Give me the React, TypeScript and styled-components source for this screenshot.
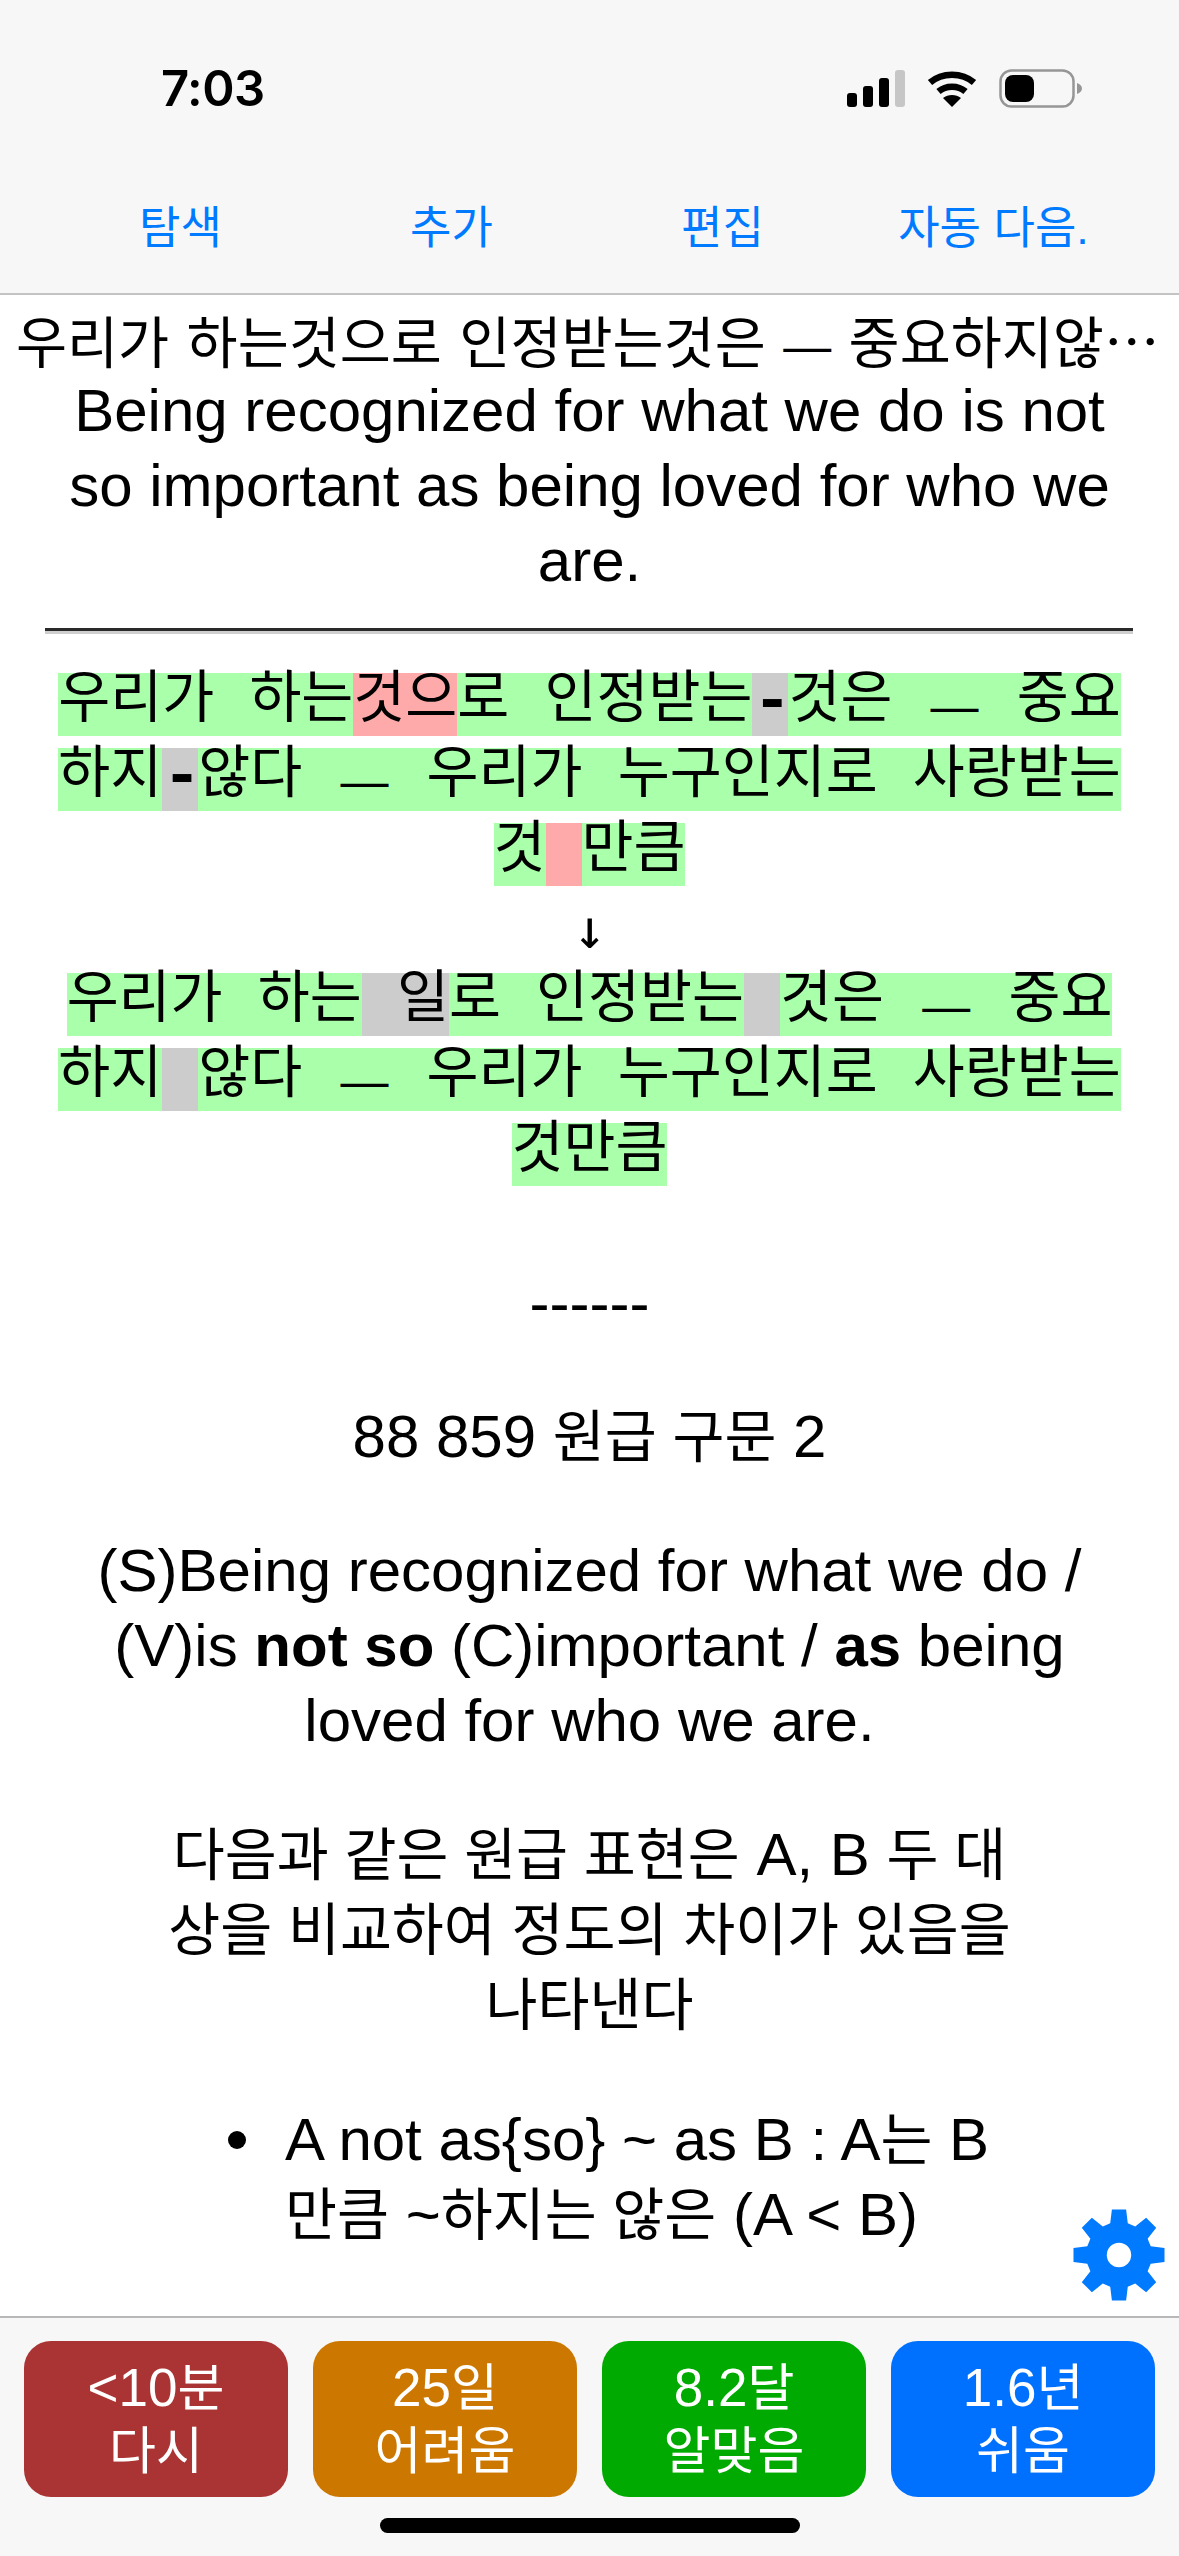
import styled, { createGlobalStyle } from 'styled-components';

const GlobalStyle = createGlobalStyle`
    html, body {
        margin: 0;
        padding: 0;
        background: #fff;
    }
`;

const sans = `"Liberation Sans", "Noto Sans CJK KR", sans-serif`;
const mono = `"Liberation Mono", "Noto Sans CJK KR", monospace`;

const Screen = styled.div`
    width: 1179px;
    height: 2556px;
    display: flex;
    flex-direction: column;
    overflow: hidden;
    position: relative;
    font-family: ${sans};
    color: #000;
`;

const Header = styled.header`
    height: 295px;
    flex: none;
    box-sizing: border-box;
    background: #f7f7f7;
    border-bottom: 2px solid #c4c4c4;
    display: flex;
    flex-direction: column;
`;

const StatusBar = styled.div`
    height: 88px;
    margin-top: 44px;
    display: flex;
    align-items: center;
    justify-content: space-between;
    padding: 0 97px 0 161px;
`;

const Clock = styled.span`
    font-family: Inter, sans-serif;
    font-size: 49px;
    font-weight: 600;
    letter-spacing: -0.5px;
`;

const StatusIcons = styled.div`
    display: flex;
    align-items: center;
    gap: 22px;
`;

const Nav = styled.nav`
    display: grid;
    grid-template-columns: repeat(4, 271px);
    padding: 0 45px;
    margin-top: 67px;
`;

const NavItem = styled.span`
    text-align: center;
    color: #007aff;
    font-size: 45px;
    line-height: 60px;
`;

const Main = styled.main`
    flex: 1;
    min-height: 0;
    padding-top: 14px;
    text-align: center;
    font-size: 60px;
    line-height: 75px;
`;

const Ko = styled.span`
    font-size: 56.5px;
    line-height: 1;
`;

const Title = styled.div`
    margin: 0 16px;
    white-space: nowrap;
    overflow: hidden;
    text-overflow: ellipsis;
    font-family: "Noto Sans CJK KR", sans-serif;
    font-size: 55.5px;
    line-height: 60px;
    word-spacing: 5px;
`;

const TitleDash = styled.span`
    font-family: "Liberation Sans", sans-serif;
    font-size: 48px;
`;

const Sentence = styled.div`
    margin-top: -4px;
    padding-bottom: 30px;
`;

const Rule = styled.hr`
    margin: 0 46px 39px 45px;
    height: 0;
    border: 0;
    border-top: 3px solid #2a2a2a;
    border-bottom: 3px solid #cfcfcf;
`;

const Compare = styled.div`
    display: flex;
    flex-direction: column;
    align-items: center;
    gap: 12px;
`;

const CompareLine = styled.div`
    height: 63px;
    display: flex;
    font-family: ${mono};
    font-size: 56.5px;
    line-height: 59px;
    white-space: pre;
    word-spacing: 1.3px;
`;

const toneColors = { good: '#aaffaa', bad: '#ffaaaa', missing: '#cccccc' };

const Seg = styled.span<{ $tone: keyof typeof toneColors; $width?: number }>`
    display: block;
    background: ${(p) => toneColors[p.$tone]};
    ${(p) => (p.$width ? `width: ${p.$width}px; text-align: center;` : '')}
`;

const EmDash = styled.span`
    font-family: "Liberation Sans", sans-serif;
    font-size: 48px;
    margin: 0 3px;
    vertical-align: -6px;
`;

const MissingDash = styled.span`
    font-family: "Liberation Mono", monospace;
    font-size: 66px;
    font-weight: 700;
    vertical-align: -2px;
`;

const Arrow = styled.div`
    font-family: "DejaVu Sans Mono", monospace;
    font-size: 55px;
    line-height: 63px;
    text-align: center;
`;

const Separator = styled.p`
    margin: 79px 0 0;
`;

const Para = styled.p`
    margin: 59px 0 0;
    padding: 0 40px;
`;

const List = styled.ul`
    margin: 60px 0 0;
    padding: 0 0 0 285px;
    text-align: left;
    list-style: none;
`;

const ListItem = styled.li`
    position: relative;

    &::before {
        content: "";
        position: absolute;
        left: -57px;
        top: 29px;
        width: 18px;
        height: 18px;
        border-radius: 50%;
        background: #000;
    }
`;

const Footer = styled.footer`
    height: 240px;
    flex: none;
    box-sizing: border-box;
    background: #f7f7f7;
    border-top: 2px solid #b8b8b8;
    padding: 23px 24px 0;
    display: flex;
    flex-direction: column;
    align-items: center;
`;

const Answers = styled.div`
    width: 100%;
    display: grid;
    grid-template-columns: repeat(4, 264px);
    justify-content: space-between;
`;

const Answer = styled.button<{ $bg: string }>`
    height: 156px;
    border: 0;
    padding: 0;
    border-radius: 27px;
    background: ${(p) => p.$bg};
    color: #fff;
    font-family: ${sans};
    font-size: 53px;
    line-height: 63px;
`;

const AnswerKo = styled.span`
    font-size: 51px;
    line-height: 1;
`;

const HomeBar = styled.div`
    width: 420px;
    height: 15px;
    margin-top: 21px;
    border-radius: 8px;
    background: #000;
`;

const GearButton = styled.div`
    position: absolute;
    left: 1072px;
    top: 2208px;
    width: 94px;
    height: 94px;
`;

const gearPath = (() => {
    const cx = 50;
    const cy = 50;
    const teeth = 8;
    const outer = 49;
    const root = 35;
    const pt = (r: number, a: number) =>
        `${(cx + r * Math.cos(a)).toFixed(2)} ${(cy + r * Math.sin(a)).toFixed(2)}`;
    let d = '';
    for (let i = 0; i < teeth; i++) {
        const a = (i * 2 * Math.PI) / teeth - Math.PI / 2;
        const baseHalf = 0.27;
        const tipHalf = 0.155;
        d += `${i === 0 ? 'M' : 'L'}${pt(root, a - baseHalf)} L${pt(outer, a - tipHalf)} L${pt(outer, a + tipHalf)} L${pt(root, a + baseHalf)} `;
    }
    d += 'Z M50 37 A13 13 0 1 0 50 63 A13 13 0 1 0 50 37 Z';
    return d;
})();

const Signal = () => (
    <svg width="58" height="37" viewBox="0 0 58 37">
        <rect x="0" y="23" width="10" height="14" rx="3" fill="#000" />
        <rect x="16" y="16" width="10" height="21" rx="3" fill="#000" />
        <rect x="32" y="8" width="10" height="29" rx="3" fill="#000" />
        <rect x="48" y="0" width="10" height="37" rx="3" fill="#c6c6c6" />
    </svg>
);

const Wifi = () => (
    <svg width="50" height="37" viewBox="0 0 50 37" fill="none" stroke="#000" strokeWidth="6.5">
        <path d="M3 12.5 C15 2 35 2 47 12.5" />
        <path d="M11.5 21.5 C19 15 31 15 38.5 21.5" />
        <path d="M25 37 L16 28 C21 24 29 24 34 28 Z" fill="#000" stroke="none" />
    </svg>
);

const Battery = () => (
    <svg width="83" height="39" viewBox="0 0 83 39">
        <rect x="1.5" y="1.5" width="73" height="36" rx="11" fill="none" stroke="#969696" strokeWidth="2.5" />
        <rect x="6" y="6" width="29" height="27" rx="8" fill="#000" />
        <path d="M78 14 C81 15 83 17 83 19.5 C83 22 81 24 78 25 Z" fill="#969696" />
    </svg>
);

export default function App() {
    return (
        <Screen>
            <GlobalStyle />
            <Header>
                <StatusBar>
                    <Clock>7:03</Clock>
                    <StatusIcons>
                        <Signal />
                        <Wifi />
                        <Battery />
                    </StatusIcons>
                </StatusBar>
                <Nav>
                    <NavItem>탐색</NavItem>
                    <NavItem>추가</NavItem>
                    <NavItem>편집</NavItem>
                    <NavItem>자동 다음.</NavItem>
                </Nav>
            </Header>
            <Main>
                <Title>우리가 하는것으로 인정받는것은 <TitleDash>—</TitleDash> 중요하지않다 <TitleDash>—</TitleDash> 우리가 누구인지로 사랑받는것만큼</Title>
                <Sentence>
                    Being recognized for what we do is not
                    <br />
                    so important as being loved for who we
                    <br />
                    are.
                </Sentence>
                <Rule />
                <Compare>
                    <CompareLine>
                        <Seg $tone="good">우리가 하는</Seg>
                        <Seg $tone="bad">것으</Seg>
                        <Seg $tone="good">로 인정받는</Seg>
                        <Seg $tone="missing" $width={36}><MissingDash>-</MissingDash></Seg>
                        <Seg $tone="good">것은 <EmDash>—</EmDash> 중요</Seg>
                    </CompareLine>
                    <CompareLine>
                        <Seg $tone="good">하지</Seg>
                        <Seg $tone="missing" $width={36}><MissingDash>-</MissingDash></Seg>
                        <Seg $tone="good">않다 <EmDash>—</EmDash> 우리가 누구인지로 사랑받는</Seg>
                    </CompareLine>
                    <CompareLine>
                        <Seg $tone="good">것</Seg>
                        <Seg $tone="bad" $width={36}> </Seg>
                        <Seg $tone="good">만큼</Seg>
                    </CompareLine>
                    <Arrow>↓</Arrow>
                    <CompareLine>
                        <Seg $tone="good">우리가 하는</Seg>
                        <Seg $tone="missing"> 일</Seg>
                        <Seg $tone="good">로 인정받는</Seg>
                        <Seg $tone="missing" $width={36}> </Seg>
                        <Seg $tone="good">것은 <EmDash>—</EmDash> 중요</Seg>
                    </CompareLine>
                    <CompareLine>
                        <Seg $tone="good">하지</Seg>
                        <Seg $tone="missing" $width={36}> </Seg>
                        <Seg $tone="good">않다 <EmDash>—</EmDash> 우리가 누구인지로 사랑받는</Seg>
                    </CompareLine>
                    <CompareLine>
                        <Seg $tone="good">것만큼</Seg>
                    </CompareLine>
                </Compare>
                <Separator>------</Separator>
                <Para>88 859 <Ko>원급 구문</Ko> 2</Para>
                <Para>
                    (S)Being recognized for what we do /
                    <br />
                    (V)is <b>not so</b> (C)important / <b>as</b> being
                    <br />
                    loved for who we are.
                </Para>
                <Para>
                    <Ko>다음과 같은 원급 표현은</Ko> A, B <Ko>두 대</Ko>
                    <br />
                    <Ko>상을 비교하여 정도의 차이가 있음을</Ko>
                    <br />
                    <Ko>나타낸다</Ko>
                </Para>
                <List>
                    <ListItem>
                        A not as{'{'}so{'}'} ~ as B : A<Ko>는</Ko> B
                        <br />
                        <Ko>만큼</Ko> ~<Ko>하지는 않은</Ko> (A &lt; B)
                    </ListItem>
                </List>
            </Main>
            <GearButton>
                <svg width="94" height="94" viewBox="0 0 100 100">
                    <path d={gearPath} fill="#007aff" fillRule="evenodd" />
                </svg>
            </GearButton>
            <Footer>
                <Answers>
                    <Answer $bg="#aa3333">&lt;10<AnswerKo>분</AnswerKo><br /><AnswerKo>다시</AnswerKo></Answer>
                    <Answer $bg="#cc7700">25<AnswerKo>일</AnswerKo><br /><AnswerKo>어려움</AnswerKo></Answer>
                    <Answer $bg="#00aa00">8.2<AnswerKo>달</AnswerKo><br /><AnswerKo>알맞음</AnswerKo></Answer>
                    <Answer $bg="#0070ff">1.6<AnswerKo>년</AnswerKo><br /><AnswerKo>쉬움</AnswerKo></Answer>
                </Answers>
                <HomeBar />
            </Footer>
        </Screen>
    );
}
